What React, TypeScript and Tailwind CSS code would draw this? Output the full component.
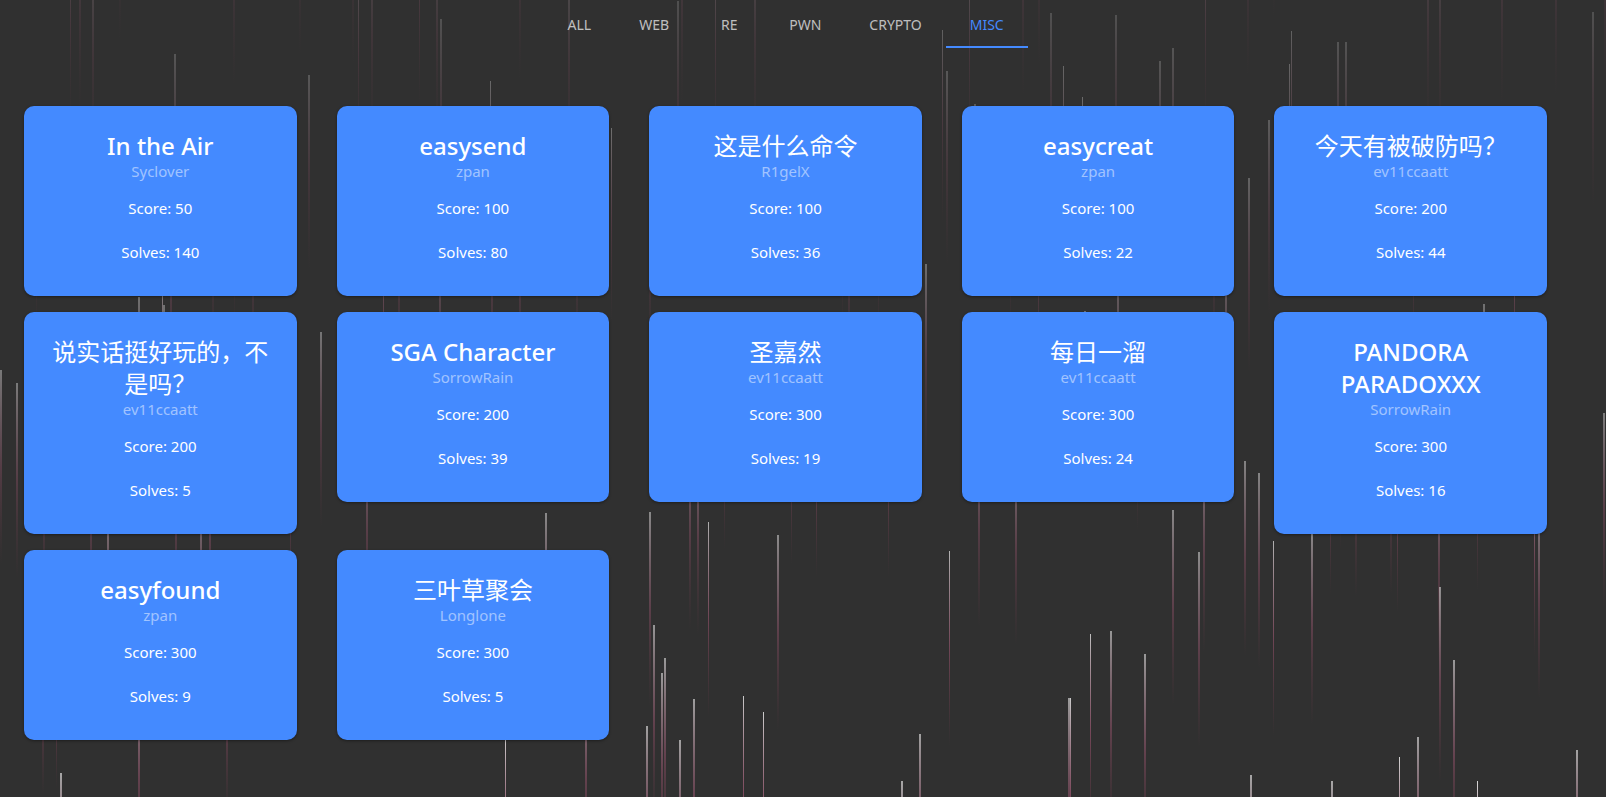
const TABS = ['ALL', 'WEB', 'RE', 'PWN', 'CRYPTO', 'MISC'];
const ACTIVE_TAB = 'MISC';

type Challenge = { title: string; author: string; score: number; solves: number };

const CHALLENGES: Challenge[] = [
  { title: 'In the Air', author: 'Syclover', score: 50, solves: 140 },
  { title: 'easysend', author: 'zpan', score: 100, solves: 80 },
  { title: '这是什么命令', author: 'R1gelX', score: 100, solves: 36 },
  { title: 'easycreat', author: 'zpan', score: 100, solves: 22 },
  { title: '今天有被破防吗？', author: 'ev11ccaatt', score: 200, solves: 44 },
  { title: '说实话挺好玩的，不是吗？', author: 'ev11ccaatt', score: 200, solves: 5 },
  { title: 'SGA Character', author: 'SorrowRain', score: 200, solves: 39 },
  { title: '圣嘉然', author: 'ev11ccaatt', score: 300, solves: 19 },
  { title: '每日一溜', author: 'ev11ccaatt', score: 300, solves: 24 },
  { title: 'PANDORA PARADOXXX', author: 'SorrowRain', score: 300, solves: 16 },
  { title: 'easyfound', author: 'zpan', score: 300, solves: 9 },
  { title: '三叶草聚会', author: 'Longlone', score: 300, solves: 5 },
];

const DROP_LENGTH = 195;

// Each drop: x, y of its head, stroke width.
const DROPS: [number, number, number][] = [
  [70, -75, 1], [80, -85, 2], [93, -40, 2], [120, -155, 2], [234, -110, 2], [300, -140, 2],
  [175, 54, 2], [309, 75, 2], [353, -130, 2], [358, -45, 1], [372, -60, 2], [419, -90, 1],
  [437, -60, 2], [441, 19, 2], [490, 81, 1], [520, -115, 2],
  [569, -30, 2], [678, 1, 2], [682, -90, 2], [715, -50, 1], [755, -55, 2], [611, 128, 1],
  [942, 30, 1], [947, 71, 2], [969, -45, 1], [1023, -100, 2], [1039, -130, 2], [1051, 13, 2],
  [1063, 66, 1], [1082, 97, 1], [975, 104, 2], [926, 264, 2],
  [1116, 15, 2], [1160, 61, 2], [1173, 48, 2], [1205, -70, 1], [1248, -120, 2], [1274, -178, 2],
  [1291, 31, 1], [1289, 64, 1], [1338, 42, 2], [1346, 42, 2], [1428, -70, 2], [1440, -55, 2],
  [1502, -90, 2], [1556, -100, 2], [1593, 12, 2], [1605, -110, 2], [1269, 120, 2], [1249, 178, 2],
  [36, 130, 1], [139, 297, 2], [162, 280, 1], [164, 305, 2], [171, 205, 2], [213, 160, 2],
  [234, 130, 1], [253, 175, 2], [383, 220, 1], [399, 190, 2], [440, 230, 2], [492, 200, 2],
  [520, 195, 2], [577, 165, 2], [650, 165, 2], [842, 130, 1], [849, 180, 2], [878, 140, 1],
  [1010, 135, 1], [1038, 180, 1], [1085, 311, 2], [1118, 265, 2], [1214, 160, 2], [1226, 260, 2],
  [1413, 155, 1], [1484, 304, 2], [1514, 210, 1],
  [1, 370, 2], [17, 383, 2], [321, 332, 2], [44, 400, 2], [91, 430, 2], [108, 500, 2],
  [176, 430, 2], [201, 490, 2], [210, 445, 2], [290, 400, 1], [367, 435, 2], [546, 513, 2],
  [650, 512, 2], [690, 435, 2], [698, 440, 2], [708, 522, 1], [724, 355, 1], [778, 535, 2],
  [791, 370, 1], [816, 382, 1], [888, 382, 1], [949, 551, 1], [979, 432, 2], [1016, 450, 2],
  [1137, 335, 1], [1173, 510, 2], [1199, 552, 2], [1204, 458, 2], [1245, 461, 2], [1259, 473, 2],
  [1273, 541, 1], [1312, 530, 2], [1330, 400, 1], [1340, 355, 1], [1356, 402, 2], [1391, 400, 2],
  [1397, 418, 1], [1439, 470, 2], [1477, 395, 1], [1534, 462, 1], [1539, 503, 2], [1604, 413, 2],
  [43, 600, 2], [56, 594, 1], [61, 773, 2], [139, 680, 2], [227, 620, 2], [505, 735, 1],
  [586, 680, 2], [647, 726, 2], [654, 625, 2], [662, 673, 2], [665, 658, 2], [680, 740, 2],
  [694, 699, 2], [743, 696, 1], [763, 712, 1], [902, 781, 2], [920, 734, 2], [1069, 698, 2],
  [1090, 634, 1], [1111, 631, 2], [1145, 654, 2], [1440, 587, 2], [1454, 660, 2], [1251, 775, 2],
  [1332, 781, 2], [1399, 757, 1], [1418, 737, 2], [1477, 781, 1], [1577, 750, 2], [1070, 698, 1],
];

const dropOpacity = (y: number, width: number) =>
  (0.17 + Math.max(0, y) * 0.0006) * (width === 1 ? 1.4 : 1);

const isLatin = (text: string) => /^[\x20-\x7e]+$/.test(text);

function Rain() {
  return (
    <svg className="pointer-events-none absolute inset-0 h-full w-full" aria-hidden="true">
      <defs>
        <linearGradient id="drop" x1="0" y1="0" x2="0" y2="1">
          <stop offset="0" stopColor="#ffffff" stopOpacity="0.9" />
          <stop offset="0.5" stopColor="#c8648a" stopOpacity="0.6" />
          <stop offset="1" stopColor="#a03c5a" stopOpacity="0" />
        </linearGradient>
      </defs>
      {DROPS.map(([x, y, w], i) => (
        <rect
          key={i}
          x={w === 1 ? x : x - 1}
          y={y}
          width={w}
          height={DROP_LENGTH}
          fill="url(#drop)"
          opacity={dropOpacity(y, w)}
        />
      ))}
    </svg>
  );
}

function Card({ title, author, score, solves }: Challenge) {
  return (
    <li className="rounded-[10px] bg-[#448aff] px-6 pt-6 pb-[22px] text-center shadow-[0_1px_3px_rgba(0,0,0,0.4)]">
      <h2 className={isLatin(title) ? 'text-2xl leading-8 font-medium' : 'text-2xl leading-8 font-normal'}>
        {title}
      </h2>
      <p className="text-[15px] leading-[18px] text-white/50">{author}</p>
      <p className="mt-1.5 text-[15px] leading-[44px]">Score: {score}</p>
      <p className="text-[15px] leading-[44px]">Solves: {solves}</p>
    </li>
  );
}

export default function App() {
  return (
    <div className="relative min-h-screen overflow-hidden bg-[#303030] font-['Noto_Sans','Noto_Sans_CJK_SC',sans-serif] text-white">
      <Rain />
      <div className="relative pr-[59px] pl-6">
        <nav className="flex justify-center" aria-label="Categories">
          {TABS.map((tab) => (
            <button
              key={tab}
              type="button"
              className={
                tab === ACTIVE_TAB
                  ? 'h-12 min-w-[72px] border-b-2 border-[#448aff] px-6 pt-1 text-sm text-[#448aff]'
                  : 'h-12 min-w-[72px] border-b-2 border-transparent px-6 pt-1 text-sm text-white/70'
              }
            >
              {tab}
            </button>
          ))}
        </nav>
        <ul className="mt-[58px] grid grid-cols-5 items-start gap-x-10 gap-y-4 pb-14">
          {CHALLENGES.map((c) => (
            <Card key={c.title} {...c} />
          ))}
        </ul>
      </div>
    </div>
  );
}
